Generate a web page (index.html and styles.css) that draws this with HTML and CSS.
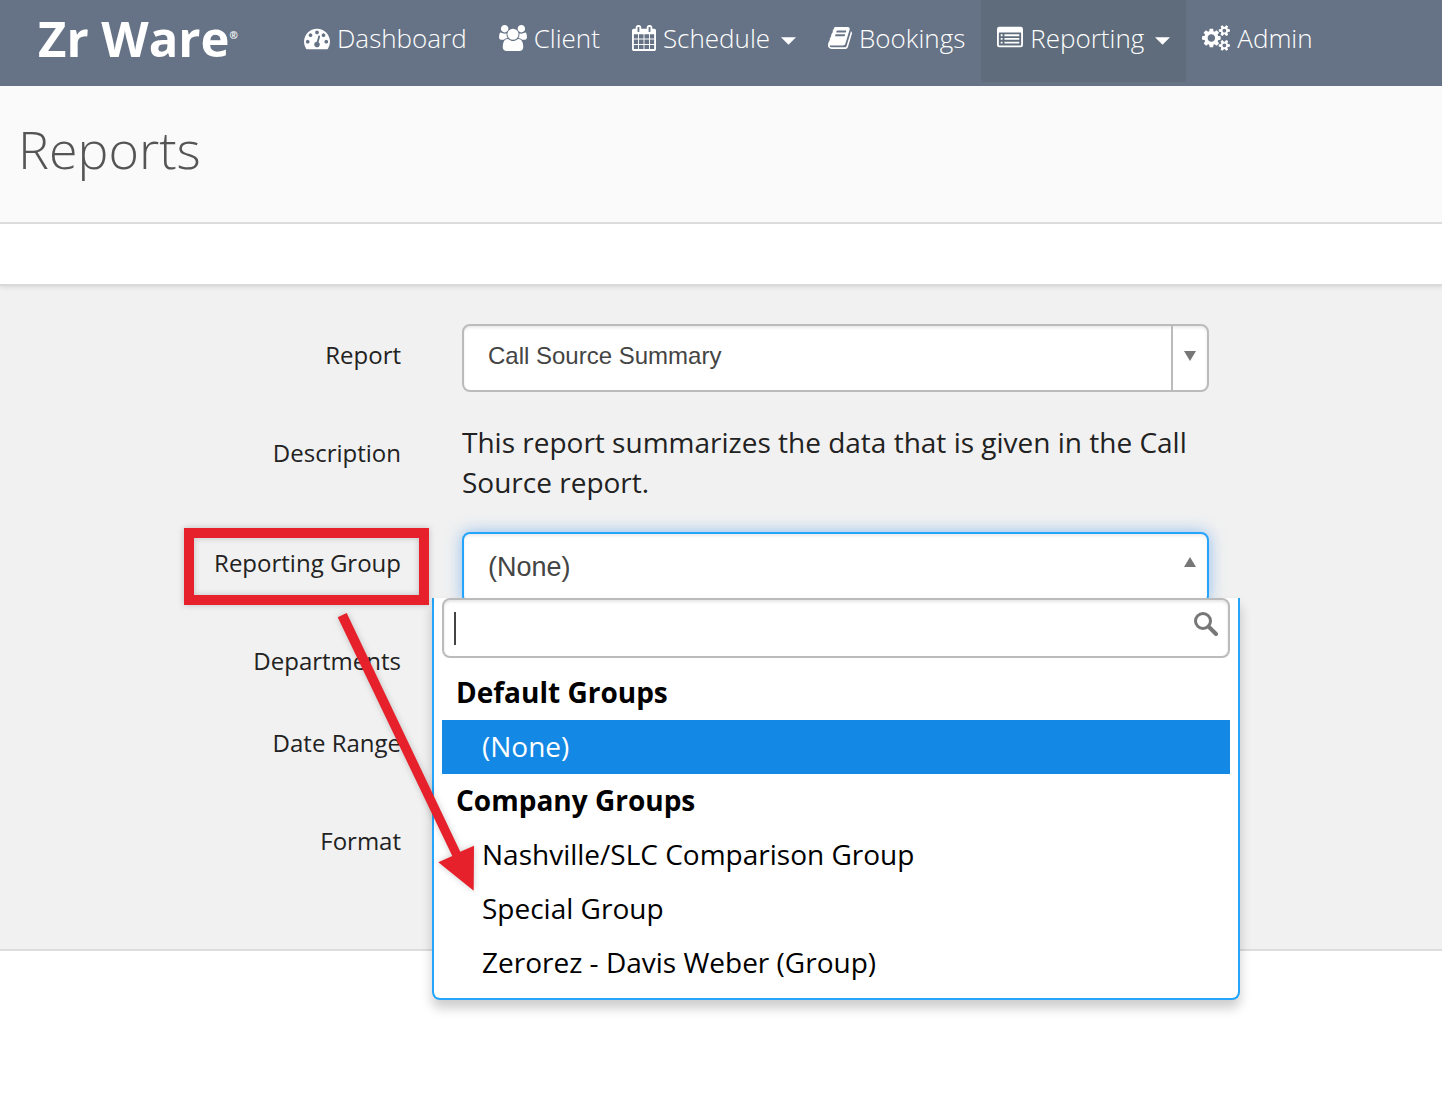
FILE: index.html
```html
<!DOCTYPE html>
<html lang="en">
<head>
<meta charset="utf-8">
<meta name="viewport" content="width=device-width, initial-scale=1">
<title>Reports - Zr Ware</title>
<link rel="stylesheet" href="styles.css">
</head>
<body>
<header class="topbar">
  <a class="brand" href="#">Zr Ware<sup class="brand-mark">®</sup></a>
  <nav class="nav" aria-label="Main">
    <a class="nav-link" href="#">
      <svg class="icon" viewBox="0 0 1792 1792" aria-hidden="true"><path d="M384 1152q0-53-37.5-90.5t-90.5-37.5-90.5 37.5-37.5 90.5 37.5 90.5 90.5 37.5 90.5-37.5 37.5-90.5zm192-448q0-53-37.5-90.5t-90.5-37.5-90.5 37.5-37.5 90.5 37.5 90.5 90.5 37.5 90.5-37.5 37.5-90.5zm428 481l101-382q6-26-7.5-48.5t-38.5-29.5-48 6.5-30 39.5l-101 382q-60 5-107 43.5t-63 98.5q-20 77 20 146t117 89 146-20 89-117q16-60-6-117t-72-91zm660-33q0-53-37.5-90.5t-90.5-37.5-90.5 37.5-37.5 90.5 37.5 90.5 90.5 37.5 90.5-37.5 37.5-90.5zm-640-640q0-53-37.5-90.5t-90.5-37.5-90.5 37.5-37.5 90.5 37.5 90.5 90.5 37.5 90.5-37.5 37.5-90.5zm448 192q0-53-37.5-90.5t-90.5-37.5-90.5 37.5-37.5 90.5 37.5 90.5 90.5 37.5 90.5-37.5 37.5-90.5zm320 448q0 261-141 483-19 29-54 29h-1402q-35 0-54-29-141-221-141-483 0-182 71-348t191-286 286-191 348-71 348 71 286 191 191 286 71 348z"/></svg>
      <span>Dashboard</span>
    </a>
    <a class="nav-link" href="#">
      <svg class="icon icon-wide" viewBox="0 0 1920 1792" aria-hidden="true"><path d="M593 896q-162 5-265 128h-134q-82 0-138-40.5t-56-118.5q0-353 124-353 6 0 43.5 21t97.5 42.5 119 21.5q67 0 133-23-5 37-5 66 0 139 81 256zm1071 637q0 120-73 189.5t-194 69.5h-874q-121 0-194-69.5t-73-189.5q0-53 3.5-103.5t14-109 26.5-108.5 43-97.5 62-81 85.5-53.5 111.5-20q10 0 43 21.5t73 48 107 48 135 21.5 135-21.5 107-48 73-48 43-21.5q61 0 111.5 20t85.5 53.5 62 81 43 97.5 26.5 108.5 14 109 3.5 103.5zm-1024-1277q0 106-75 181t-181 75-181-75-75-181 75-181 181-75 181 75 75 181zm704 384q0 159-112.5 271.5t-271.5 112.5-271.5-112.5-112.5-271.5 112.5-271.5 271.5-112.5 271.5 112.5 112.5 271.5zm576 225q0 78-56 118.5t-138 40.5h-134q-103-123-265-128 81-117 81-256 0-29-5-66 66 23 133 23 59 0 119-21.5t97.5-42.5 43.5-21q124 0 124 353zm-128-609q0 106-75 181t-181 75-181-75-75-181 75-181 181-75 181 75 75 181z"/></svg>
      <span>Client</span>
    </a>
    <a class="nav-link" href="#">
      <svg class="icon icon-narrow" viewBox="64 0 1664 1792" aria-hidden="true"><path d="M192 1664h288v-288h-288v288zm352 0h320v-288h-320v288zm-352-352h288v-320h-288v320zm352 0h320v-320h-320v320zm-352-384h288v-288h-288v288zm736 736h320v-288h-320v288zm-384-736h320v-288h-320v288zm768 736h288v-288h-288v288zm-384-352h320v-320h-320v320zm-352-864v-288q0-13-9.5-22.5t-22.5-9.5h-64q-13 0-22.5 9.5t-9.5 22.5v288q0 13 9.5 22.5t22.5 9.5h64q13 0 22.5-9.5t9.5-22.5zm736 864h288v-320h-288v320zm-384-384h320v-288h-320v288zm384 0h288v-288h-288v288zm32-480v-288q0-13-9.5-22.5t-22.5-9.5h-64q-13 0-22.5 9.5t-9.5 22.5v288q0 13 9.5 22.5t22.5 9.5h64q13 0 22.5-9.5t9.5-22.5zm384-64v1280q0 52-38 90t-90 38h-1408q-52 0-90-38t-38-90v-1280q0-52 38-90t90-38h128v-96q0-66 47-113t113-47h64q66 0 113 47t47 113v96h384v-96q0-66 47-113t113-47h64q66 0 113 47t47 113v96h128q52 0 90 38t38 90z"/></svg>
      <span>Schedule</span>
      <svg class="caret" viewBox="0 0 16 8" aria-hidden="true"><path d="M0 0h16L8 8z"/></svg>
    </a>
    <a class="nav-link" href="#">
      <svg class="icon icon-narrow" viewBox="64 0 1664 1792" aria-hidden="true"><path d="M1703 478q40 57 18 129l-275 906q-19 64-76.5 107.5t-122.5 43.5h-923q-77 0-148.5-53.5t-99.5-131.5q-24-67-2-127 0-4 3-27t4-37q1-8-3-21.5t-3-19.5q2-11 8-21t16.5-23.5 16.5-23.5q23-38 45-91.5t30-91.5q3-10 .5-30t-.5-28q3-11 17-28t17-23q21-36 42-92t25-90q1-9-2.5-32t.5-28q4-13 22-30.5t22-22.5q19-26 42.5-84.5t27.5-96.5q1-8-3-25.5t-2-26.5q2-8 9-18t18-23 17-21q8-12 16.5-30.5t15-35 16-36 19.5-32 26.5-23.5 36-11.5 47.5 5.5l-1 3q38-9 51-9h761q74 0 114 56t18 130l-274 906q-36 119-71.5 153.5t-128.5 34.5h-869q-27 0-38 15-11 16-1 43 24 70 144 70h923q29 0 56-15.5t35-41.5l300-987q7-22 5-57 38 15 59 43zm-1064 2q-4 13 2 22.5t20 9.5h608q13 0 25.5-9.5t16.5-22.5l21-64q4-13-2-22.5t-20-9.5h-608q-13 0-25.5 9.5t-16.5 22.5zm-83 256q-4 13 2 22.5t20 9.5h608q13 0 25.5-9.5t16.5-22.5l21-64q4-13-2-22.5t-20-9.5h-608q-13 0-25.5 9.5t-16.5 22.5z"/></svg>
      <span>Bookings</span>
    </a>
    <a class="nav-link nav-link-active" href="#" aria-current="page">
      <svg class="icon" viewBox="0 0 1792 1792" aria-hidden="true"><path fill-rule="evenodd" d="M160 128h1472a160 160 0 0 1 160 160v1088a160 160 0 0 1-160 160H160A160 160 0 0 1 0 1376V288a160 160 0 0 1 160-160zM160 512a32 32 0 0 0-32 32v832a32 32 0 0 0 32 32h1472a32 32 0 0 0 32-32V544a32 32 0 0 0-32-32z"/><path d="M256 640h128v128H256zM256 896h128v128H256zM256 1152h128v128H256zM512 640h1024v128H512zM512 896h1024v128H512zM512 1152h1024v128H512z"/></svg>
      <span>Reporting</span>
      <svg class="caret" viewBox="0 0 16 8" aria-hidden="true"><path d="M0 0h16L8 8z"/></svg>
    </a>
    <a class="nav-link" href="#">
      <svg class="icon icon-wide" viewBox="0 0 1920 1792" aria-hidden="true"><path d="M896 896q0-106-75-181t-181-75-181 75-75 181 75 181 181 75 181-75 75-181zm768 512q0-52-38-90t-90-38-90 38-38 90q0 53 37.5 90.5t90.5 37.5 90.5-37.5 37.5-90.5zm0-1024q0-52-38-90t-90-38-90 38-38 90q0 53 37.5 90.5t90.5 37.5 90.5-37.5 37.5-90.5zm-384 421v185q0 10-7 19.5t-16 10.5l-155 24q-11 35-32 76 34 48 90 115 7 11 7 20 0 12-7 19-23 30-82.5 89.5t-78.5 59.5q-11 0-21-7l-115-90q-37 19-77 31-11 108-23 155-7 24-30 24h-186q-11 0-20-7.5t-10-17.5l-23-153q-34-10-75-31l-118 89q-7 7-20 7-11 0-21-8-144-133-144-160 0-9 7-19 10-14 41-53t47-61q-23-44-35-82l-152-24q-10-1-17-9.5t-7-19.5v-185q0-10 7-19.5t16-10.5l155-24q11-35 32-76-34-48-90-115-7-11-7-20 0-12 7-20 22-30 82-89t79-59q11 0 21 7l115 90q34-18 77-32 11-108 23-154 7-24 30-24h186q11 0 20 7.5t10 17.5l23 153q34 10 75 31l118-89q8-7 20-7 11 0 21 8 144 133 144 160 0 8-7 19-12 16-42 54t-45 60q23 48 34 82l152 23q10 2 17 10.5t7 19.5zm640 533v140q0 16-149 31-12 27-30 52 51 113 51 138 0 4-4 7-122 71-124 71-8 0-46-47t-52-68q-20 2-30 2t-30-2q-14 21-52 68t-46 47q-2 0-124-71-4-3-4-7 0-25 51-138-18-25-30-52-149-15-149-31v-140q0-16 149-31 13-29 30-52-51-113-51-138 0-4 4-7 4-2 35-20t59-34 30-16q8 0 46 46.5t52 67.5q20-2 30-2t30 2q51-71 92-112l6-2q4 0 124 70 4 3 4 7 0 25-51 138 17 23 30 52 149 15 149 31zm0-1024v140q0 16-149 31-12 27-30 52 51 113 51 138 0 4-4 7-122 71-124 71-8 0-46-47t-52-68q-20 2-30 2t-30-2q-14 21-52 68t-46 47q-2 0-124-71-4-3-4-7 0-25 51-138-18-25-30-52-149-15-149-31v-140q0-16 149-31 13-29 30-52-51-113-51-138 0-4 4-7 4-2 35-20t59-34 30-16q8 0 46 46.5t52 67.5q20-2 30-2t30 2q51-71 92-112l6-2q4 0 124 70 4 3 4 7 0 25-51 138 17 23 30 52 149 15 149 31z"/></svg>
      <span>Admin</span>
    </a>
  </nav>
</header>
<main>
  <div class="page-head"><h1 class="page-title">Reports</h1></div>
  <div class="toolbar"></div>
  <form class="report-form">
    <div class="row">
      <label class="label" for="report">Report</label>
      <div class="combo">
        <select class="combo-select" id="report">
          <option>Call Source Summary</option>
        </select>
        <span class="combo-toggle" aria-hidden="true"><svg class="tri" viewBox="0 0 12 10"><path d="M0 0h12L6 10z"/></svg></span>
      </div>
    </div>
    <div class="row">
      <div class="label">Description</div>
      <p class="description">This report summarizes the data that is given in the Call Source report.</p>
    </div>
    <div class="row">
      <div class="label label-marked">
        <label for="group">Reporting Group</label>
        <svg class="callout" viewBox="0 0 300 380" aria-hidden="true">
          <rect x="8" y="11" width="235" height="67" fill="none" stroke="#e6212b" stroke-width="10"/>
          <path fill="#e6212b" d="M156.700 95.300L165.700 91 279.300 329.700 293 323.700 292.700 368.700 257.300 340.300 271.300 334z"/>
        </svg>
      </div>
      <div class="picker">
        <button class="picker-button" id="group" type="button" aria-haspopup="listbox" aria-expanded="true">
          <span>(None)</span>
          <svg class="tri tri-up" viewBox="0 0 12 10" aria-hidden="true"><path d="M0 10h12L6 0z"/></svg>
        </button>
        <div class="dropdown">
          <div class="search">
            <input class="search-input" type="text" aria-label="Search groups">
            <span class="text-cursor"></span>
            <svg class="search-icon" viewBox="0 0 24 24" aria-hidden="true"><circle cx="9" cy="9" r="7.500"/><path d="M14.500 14.500L22 22"/></svg>
          </div>
          <ul class="groups" role="listbox" aria-label="Reporting groups">
            <li class="group-name" role="presentation">Default Groups</li>
            <li class="group-item group-item-active" role="option" aria-selected="true">(None)</li>
            <li class="group-name" role="presentation">Company Groups</li>
            <li class="group-item" role="option">Nashville/SLC Comparison Group</li>
            <li class="group-item" role="option">Special Group</li>
            <li class="group-item" role="option">Zerorez - Davis Weber (Group)</li>
          </ul>
        </div>
      </div>
    </div>
    <div class="row row-short"><div class="label">Departments</div></div>
    <div class="row"><div class="label">Date Range</div></div>
    <div class="row"><div class="label">Format</div></div>
  </form>
</main>
</body>
</html>
```
FILE: styles.css
```css
* {
  box-sizing: border-box;
}

body {
  min-height: 100vh;
  margin: 0;
  background: #fff;
  color: #222;
  font-family: "Open Sans", "Noto Sans", sans-serif;
  font-size: 28px;
  line-height: 40px;
}

/* Top bar */
.topbar {
  display: flex;
  align-items: flex-start;
  height: 86px;
  background: #667386;
}

.brand {
  width: 288px;
  padding: 12px 0 0 38px;
  color: #fff;
  font-size: 49px;
  font-weight: 700;
  line-height: 52px;
  text-decoration: none;
  white-space: nowrap;
}

.brand-mark {
  font-size: 10px;
  line-height: 10px;
  vertical-align: 18px;
}

.nav {
  display: flex;
}

.nav-link {
  display: flex;
  align-items: center;
  gap: 7px;
  height: 82px;
  padding: 0 16px 6px;
  color: #fff;
  font-size: 26px;
  font-weight: 300;
  text-decoration: none;
  white-space: nowrap;
}

.nav-link-active {
  background: #5e6c7b;
}

.icon {
  width: 26px;
  height: 26px;
  fill: #fff;
}

.icon-wide {
  width: 28px;
}

.icon-narrow {
  width: 24px;
}

.caret {
  width: 15px;
  height: 8px;
  margin: 6px 0 0 4px;
  fill: #fff;
}

/* Page heading */
.page-head {
  height: 138px;
  padding: 28px 18px;
  border-bottom: 2px solid #ddd;
  background: #fafafa;
}

.page-title {
  margin: 0;
  color: #555;
  font-size: 52px;
  font-weight: 300;
  line-height: 70px;
}

.toolbar {
  position: relative;
  height: 62px;
  border-bottom: 2px solid #d9d9d9;
  background: #fff;
  box-shadow: 0 2px 4px rgba(0, 0, 0, 0.08);
}

/* Report form */
.report-form {
  display: flex;
  flex-direction: column;
  gap: 30px;
  padding: 38px 0 71px;
  border-bottom: 2px solid #ddd;
  background: #f1f1f1;
}

.row {
  display: grid;
  grid-template-columns: 401fr 747fr 172fr;
  column-gap: 61px;
  min-height: 68px;
}

.row-short {
  min-height: 52px;
}

.label {
  padding-top: 11px;
  font-size: 24px;
  text-align: right;
}

.label-marked {
  position: relative;
}

.callout {
  position: absolute;
  z-index: 3;
  top: -10px;
  right: -80px;
  width: 300px;
  height: 380px;
  filter: drop-shadow(0 0 3px rgba(0, 0, 0, 0.2));
  pointer-events: none;
}

.description {
  margin: 0;
}

.combo {
  display: flex;
  height: 68px;
  overflow: hidden;
  border: 2px solid #bbb;
  border-radius: 8px;
  background: #fff;
  box-shadow: inset 0 2px 3px rgba(0, 0, 0, 0.08);
}

.combo-select {
  flex: 1;
  padding: 0 24px 6px;
  border: 0;
  background: transparent;
  color: #444;
  font-family: "Liberation Sans", sans-serif;
  font-size: 24px;
  appearance: none;
}

.combo-toggle {
  display: flex;
  align-items: center;
  justify-content: center;
  width: 36px;
  padding-bottom: 4px;
  border-left: 2px solid #bbb;
}

.tri {
  width: 12px;
  height: 10px;
  fill: #777;
}

.picker {
  position: relative;
  height: 68px;
}

.picker-button {
  display: flex;
  align-items: center;
  justify-content: space-between;
  width: 100%;
  height: 72px;
  padding: 0 11px 2px 24px;
  border: 2px solid #24a5fb;
  border-radius: 8px;
  background: #fff;
  box-shadow: 0 0 16px rgba(80, 155, 235, 0.6), inset 0 2px 3px rgba(0, 0, 0, 0.08);
  color: #444;
  font-family: "Liberation Sans", sans-serif;
  font-size: 27px;
}

.tri-up {
  margin-bottom: 10px;
}

.dropdown {
  position: absolute;
  z-index: 2;
  top: 66px;
  left: -30px;
  right: -31px;
  padding: 0 8px 8px;
  border: 2px solid #24a5fb;
  border-top: 0;
  border-radius: 0 0 8px 8px;
  background: #fff;
  box-shadow: 0 8px 12px rgba(0, 0, 0, 0.2);
}

.search {
  position: relative;
}

.search-input {
  display: block;
  width: 100%;
  height: 60px;
  padding: 0 50px 0 12px;
  border: 2px solid #bbb;
  border-radius: 8px;
  background: #fff;
  box-shadow: inset 0 2px 3px rgba(0, 0, 0, 0.1);
  font: inherit;
}

.text-cursor {
  position: absolute;
  top: 14px;
  left: 12px;
  width: 2px;
  height: 33px;
  background: #444;
}

.search-icon {
  position: absolute;
  top: 14px;
  right: 12px;
  width: 24px;
  height: 24px;
  fill: none;
  stroke: #777;
  stroke-width: 3;
}

.search-icon path {
  stroke-linecap: round;
  stroke-width: 4;
}

.groups {
  margin: 8px 0 0;
  padding: 0;
  color: #000;
  line-height: 52px;
  list-style: none;
}

.group-name {
  padding: 0 14px 2px;
  font-weight: 700;
}

.group-item {
  padding: 0 40px 2px;
}

.group-item-active {
  background: #1388e5;
  color: #fff;
}
```
